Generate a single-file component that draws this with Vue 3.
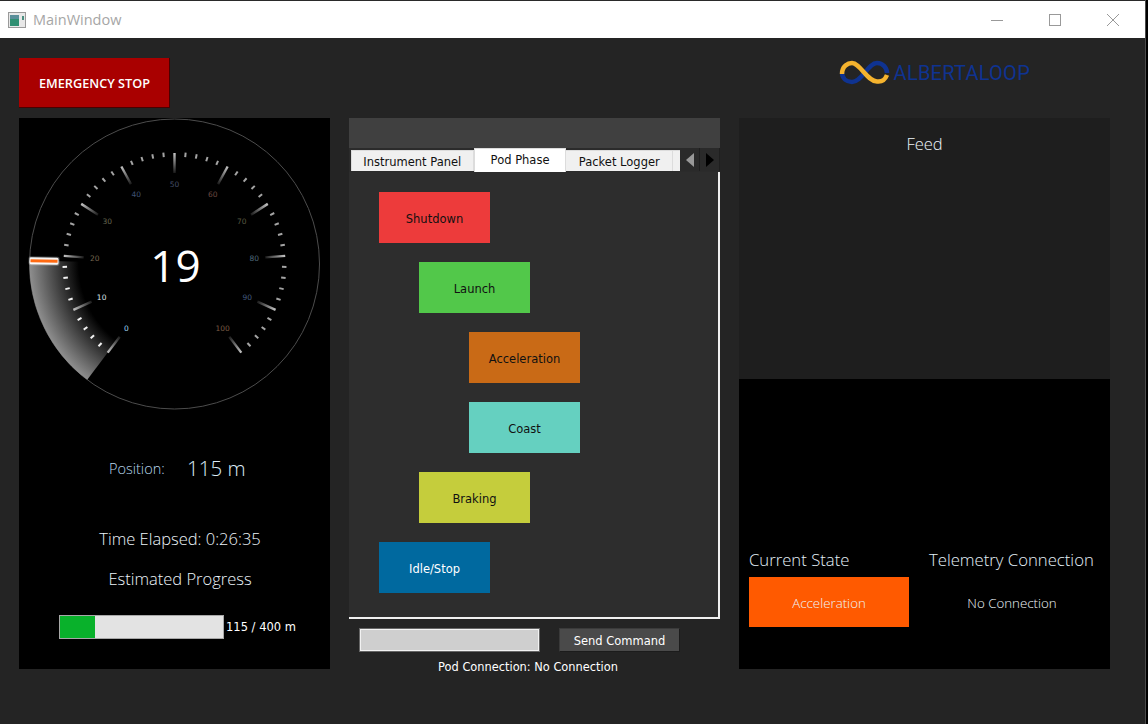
<template>
  <div class="window">
    <div class="titlebar">
      <svg class="app-icon" width="18" height="16" viewBox="0 0 18 16">
        <rect x="0.5" y="0.5" width="17" height="15" fill="#e8e8e8" stroke="#9a9a9a" />
        <rect x="2" y="3" width="9" height="11" fill="#2f8f72" />
        <rect x="2" y="3" width="9" height="4" fill="#5a8f9a" />
        <rect x="14" y="4" width="2" height="4" fill="#4a8f80" />
      </svg>
      <span class="title">MainWindow</span>
      <div class="win-controls">
        <svg width="12" height="12" viewBox="0 0 12 12"><path d="M0 6.5H12" stroke="#999" /></svg>
        <svg width="12" height="12" viewBox="0 0 12 12"><rect x="0.5" y="0.5" width="11" height="11" fill="none" stroke="#999" /></svg>
        <svg width="12" height="12" viewBox="0 0 12 12"><path d="M0 0L12 12M12 0L0 12" stroke="#999" /></svg>
      </div>
    </div>

    <div class="toprow">
      <button class="estop">EMERGENCY STOP</button>
      <div class="logo">
        <svg width="52" height="26" viewBox="838 60 52 26">
          <path d="M841 72C841 79 846 82 851 82C861 82 867 63 876 63C882 63 886 68 886 73" fill="none" stroke="#0f3391" stroke-width="4.5" />
          <path d="M841 74C841 66 847 63 851 63C859 63 866 81 876 81.5C880 82 884 80 886 75" fill="none" stroke="#f5b32e" stroke-width="4.5" />
        </svg>
        <span class="logo-text">ALBERTALOOP</span>
      </div>
    </div>

    <div class="columns">
      <section class="left">
        <svg class="gauge" width="311" height="300" viewBox="0 0 311 300">
          <defs>
            <radialGradient id="sweep" gradientUnits="userSpaceOnUse" :cx="cx" :cy="cy" r="145">
              <stop offset="0.66" stop-color="#000" />
              <stop offset="1" stop-color="#8e8e8e" />
            </radialGradient>
            <linearGradient id="majorTick" x1="0" y1="0" x2="0" y2="1">
              <stop offset="0" stop-color="#c4c4c4" />
              <stop offset="1" stop-color="#1c1c1c" />
            </linearGradient>
          </defs>
          <circle :cx="cx" :cy="cy" r="145" fill="none" stroke="#4c4c4c" />
          <path :d="sweepPath" fill="url(#sweep)" />
          <g v-for="t in minorTicks" :key="'m' + t.angle" :transform="`rotate(${t.angle + 180} ${cx} ${cy})`">
            <rect :x="cx - 1" :y="cy - 112" width="2" height="4.5" :fill="t.color" />
          </g>
          <g v-for="t in majorTicks" :key="'M' + t.value" :transform="`rotate(${t.angle + 180} ${cx} ${cy})`">
            <rect :x="cx - 1.2" :y="cy - 111" width="2.4" height="20" fill="url(#majorTick)" />
          </g>
          <text v-for="t in majorTicks" :key="'L' + t.value" class="tick-label" :x="t.lx" :y="t.ly" :fill="t.color">{{ t.value }}</text>
          <text class="readout" :x="cx + 1" :y="cy + 18">{{ speed }}</text>
          <g :transform="`rotate(${needleAngle + 180} ${cx} ${cy})`">
            <rect :x="cx - 4.5" :y="cy - 146" width="9" height="31" rx="2" fill="#fff" opacity="0.25" />
            <rect :x="cx - 3.5" :y="cy - 145" width="7" height="29" rx="1.5" fill="#fff" opacity="0.95" />
            <rect :x="cx - 1.5" :y="cy - 144" width="3" height="27" fill="#ff6a12" />
          </g>
        </svg>
        <div class="position">
          <span class="pos-label">Position:</span>
          <span class="pos-value">115 m</span>
        </div>
        <div class="time">Time Elapsed: 0:26:35</div>
        <div class="estimate">Estimated Progress</div>
        <div class="progress-row">
          <div class="progress"><div class="progress-fill" :style="{ width: progress + '%' }"></div></div>
          <span class="progress-text">115 / 400 m</span>
        </div>
      </section>

      <section class="middle">
        <div class="mid-top"></div>
        <div class="tabs">
          <div class="tab tab-one">Instrument Panel</div>
          <div class="tab tab-active">Pod Phase</div>
          <div class="tab tab-three">Packet Logger</div>
          <div class="tab tab-cut"></div>
          <div class="scroller">
            <svg width="12" height="16" viewBox="0 0 12 16"><path d="M10 1V15L2 8Z" fill="#999" /></svg>
          </div>
          <div class="scroller">
            <svg width="12" height="16" viewBox="0 0 12 16"><path d="M2 1V15L10 8Z" fill="#000" /></svg>
          </div>
        </div>
        <div class="page">
          <div v-for="p in phases" :key="p.name" class="phase" :class="p.cls">{{ p.name }}</div>
        </div>
        <div class="command-row">
          <input class="command" type="text" />
          <button class="send">Send Command</button>
        </div>
        <div class="pod-status">Pod Connection: No Connection</div>
      </section>

      <section class="right">
        <div class="feed">Feed</div>
        <div class="status">
          <div class="status-col state-col">
            <div class="status-title">Current State</div>
            <div class="state-box">Acceleration</div>
          </div>
          <div class="status-col link-col">
            <div class="status-title">Telemetry Connection</div>
            <div class="link-box">No Connection</div>
          </div>
        </div>
      </section>
    </div>
  </div>
</template>

<script setup>
import { computed, ref } from "vue";

const cx = 155.5;
const cy = 146;
const START = 37;
const SWEEP = 286;

const speed = ref(19);
const progress = ref(21.5);

const labelColors = {
  0: "#9fd4f5",
  10: "#dfe6ea",
  20: "#75664f",
  30: "#666650",
  40: "#3f5274",
  50: "#444e68",
  60: "#6c4a40",
  70: "#5a5a42",
  80: "#4f687a",
  90: "#435a7e",
  100: "#7a5a44",
};

const toAngle = (value) => START + (value / 100) * SWEEP;

const point = (angle, r) => {
  const a = (angle * Math.PI) / 180;
  return [cx - r * Math.sin(a), cy + r * Math.cos(a)];
};

const majorTicks = computed(() => {
  const out = [];
  for (let value = 0; value <= 100; value += 10) {
    const angle = toAngle(value);
    const [lx, ly] = point(angle, 80);
    out.push({ value, angle, lx, ly: ly + 3, color: labelColors[value] });
  }
  return out;
});

const minorTicks = computed(() => {
  const out = [];
  for (let value = 0; value < 100; value += 2) {
    if (value % 10 === 0) continue;
    out.push({
      angle: toAngle(value),
      color: value < speed.value ? "#f2f2f2" : "#a4a4a4",
    });
  }
  return out;
});

const needleAngle = computed(() => toAngle(speed.value));

// secteur entre le zéro et l'aiguille
const sweepPath = computed(() => {
  const [x1, y1] = point(START, 145);
  const [x2, y2] = point(needleAngle.value, 145);
  return `M${cx} ${cy}L${x1} ${y1}A145 145 0 0 1 ${x2} ${y2}Z`;
});

const phases = [
  { name: "Shutdown", cls: "shutdown" },
  { name: "Launch", cls: "launch" },
  { name: "Acceleration", cls: "acceleration" },
  { name: "Coast", cls: "coast" },
  { name: "Braking", cls: "braking" },
  { name: "Idle/Stop", cls: "idle" },
];
</script>

<style>
html,
body {
  margin: 0;
  background: #000;
  overflow: hidden;
}
</style>

<style scoped>
.window {
  width: 1145px;
  height: 724px;
  background: #242424;
  border-right: 1px solid #4a4a4a;
  font-family: "Open Sans", "Noto Sans", sans-serif;
  color: #fff;
}

.titlebar {
  height: 37px;
  background: #fff;
  border-top: 1px solid #2a2a2a;
  display: flex;
  align-items: center;
  padding-left: 8px;
}

.app-icon {
  margin-right: 7px;
}

.title {
  font-size: 14.5px;
  color: #a6a6a6;
}

.win-controls {
  margin-left: auto;
  display: flex;
  gap: 46px;
  padding-right: 26px;
}

.toprow {
  height: 80px;
  padding: 20px 115px 0 19px;
  box-sizing: border-box;
  display: flex;
  align-items: flex-start;
  justify-content: space-between;
}

.estop {
  width: 151px;
  height: 50px;
  border: none;
  border-right: 1px solid #4a0000;
  border-bottom: 1px solid #4a0000;
  background: #a90000;
  color: #fff;
  font-family: "Open Sans", sans-serif;
  font-size: 12.7px;
  font-weight: 600;
  padding: 1px 0 0 1px;
}

.logo {
  display: flex;
  align-items: center;
  gap: 3px;
  margin-top: 2px;
}

.logo-text {
  font-family: "Roboto", sans-serif;
  font-size: 20px;
  letter-spacing: 0.25px;
  color: #0f3391;
}

.columns {
  display: grid;
  grid-template-columns: 311px 371px 371px;
  gap: 19px;
  padding-left: 19px;
}

.left {
  height: 551px;
  background: #000;
  font-weight: 300;
}

.gauge {
  display: block;
}

.tick-label {
  font-family: "DejaVu Sans", sans-serif;
  font-size: 7.5px;
  font-weight: 400;
  text-anchor: middle;
}

.readout {
  font-family: "Open Sans", sans-serif;
  font-size: 44px;
  font-weight: 400;
  fill: #fff;
  text-anchor: middle;
}

.position {
  margin-top: 35px;
  height: 30px;
  padding-left: 90px;
  display: flex;
  align-items: center;
}

.pos-label {
  width: 78px;
  font-size: 14.5px;
  color: #b9d8ee;
}

.pos-value {
  font-size: 20.5px;
  color: #dcecf8;
}

.time,
.estimate {
  height: 24px;
  line-height: 24px;
  font-size: 16.5px;
  padding-left: 11px;
  text-align: center;
  color: #edf4fa;
}

.time {
  margin-top: 44px;
}

.estimate {
  margin-top: 16px;
}

.progress-row {
  margin-top: 24px;
  padding-left: 40px;
  display: flex;
  align-items: center;
  gap: 2px;
}

.progress {
  width: 165px;
  height: 24px;
  box-sizing: border-box;
  background: #e3e3e3;
  border: 1px solid #a8a8a8;
}

.progress-fill {
  height: 100%;
  background: #09b12b;
}

.progress-text,
.tab,
.phase,
.send,
.pod-status {
  font-family: "DejaVu Sans", sans-serif;
  font-size: 11.5px;
  font-weight: 400;
}

.progress-text {
  color: #fff;
}

.mid-top {
  height: 30px;
  background: #404040;
}

.tabs {
  height: 24px;
  display: flex;
  align-items: flex-start;
  background: #2b2b2b;
}

.tab {
  box-sizing: border-box;
  height: 21px;
  margin-top: 2px;
  padding-top: 2px;
  background: #f0f0f0;
  border: 1px solid #dcdcdc;
  border-bottom: none;
  color: #111;
  display: flex;
  align-items: center;
  justify-content: center;
}

.tab-one {
  width: 123px;
  margin-left: 2px;
}

.tab-active {
  width: 93px;
  height: 24px;
  margin-top: 0;
  padding: 0 0 1px;
  background: #fff;
}

.tab-three {
  width: 107px;
  border-left: none;
}

.tab-cut {
  width: 7px;
  border-left: none;
  border-right: none;
}

.scroller {
  box-sizing: border-box;
  width: 20px;
  height: 23px;
  background: #2a2a2a;
  border-right: 1px solid #1f1f1f;
  display: flex;
  align-items: center;
  justify-content: center;
}

.page {
  box-sizing: border-box;
  height: 447px;
  padding: 20px 0 0;
  background: #2d2d2d;
  border-right: 2px solid #f0f0f0;
  border-bottom: 2px solid #f0f0f0;
  display: flex;
  flex-direction: column;
  gap: 19px;
}

.phase {
  box-sizing: border-box;
  width: 111px;
  height: 51px;
  padding-top: 2px;
  display: flex;
  align-items: center;
  justify-content: center;
  color: #111;
}

.shutdown {
  margin-left: 30px;
  background: #ed3b3b;
}

.launch {
  margin-left: 70px;
  background: #52c84a;
}

.acceleration {
  margin-left: 120px;
  background: #c96a16;
}

.coast {
  margin-left: 120px;
  background: #65d0c0;
}

.braking {
  margin-left: 70px;
  background: #c5cd3c;
}

.idle {
  margin-left: 30px;
  background: #00699f;
  color: #fff;
}

.command-row {
  margin-top: 9px;
  padding-left: 10px;
  display: flex;
  gap: 19px;
}

.command {
  box-sizing: border-box;
  width: 179px;
  height: 22px;
  margin: 1px;
  background: #cfcfcf;
  border: 1px solid #f2f2f2;
  outline: 1px solid #666;
  padding: 0;
}

.send {
  box-sizing: border-box;
  width: 121px;
  height: 24px;
  padding: 2px 0 0;
  background: #4a4a4a;
  border: 1px solid #3a3a3a;
  border-right-color: #1c1c1c;
  border-bottom-color: #1c1c1c;
  color: #fff;
}

.pod-status {
  margin-top: 7px;
  height: 16px;
  line-height: 16px;
  padding-right: 13px;
  text-align: center;
  color: #fff;
  font-size: 11.4px;
}

.right {
  height: 551px;
  display: flex;
  flex-direction: column;
  font-weight: 300;
}

.feed {
  box-sizing: border-box;
  height: 261px;
  padding-top: 14px;
  background: #1e1e1e;
  font-size: 16.5px;
  line-height: 24px;
  text-align: center;
  color: #edf4fa;
}

.status {
  flex: 1;
  background: #000;
  padding: 169px 0 0 10px;
  display: flex;
  gap: 20px;
}

.state-col {
  width: 160px;
}

.link-col {
  width: 166px;
}

.status-title {
  height: 24px;
  line-height: 24px;
  font-size: 16.7px;
  color: #e4f0f8;
  white-space: nowrap;
}

.state-box,
.link-box {
  box-sizing: border-box;
  height: 50px;
  margin-top: 5px;
  padding-top: 2px;
  display: flex;
  align-items: center;
  justify-content: center;
  font-size: 13.3px;
  color: #eef4f8;
}

.state-box {
  background: #ff5a00;
}
</style>
